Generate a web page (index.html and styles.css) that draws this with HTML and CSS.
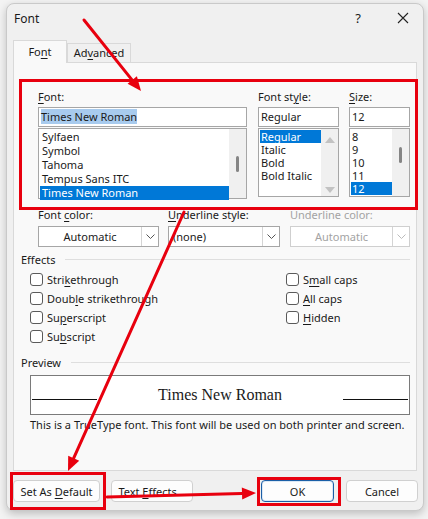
FILE: index.html
```html
<!DOCTYPE html>
<html lang="en">
<head>
  <meta charset="UTF-8" />
  <title>Font</title>
  <link rel="stylesheet" href="styles.css">
</head>
<body>
  <div class="window">
    <!-- Title bar -->
    <div class="titlebar">
      <span class="title">Font</span>
      <span class="help">?</span>
      <svg class="close" width="12" height="12" viewBox="0 0 12 12">
        <path d="M1 1 L11 11 M11 1 L1 11" stroke="#222" stroke-width="1.1" fill="none"/>
      </svg>
    </div>

    <!-- Tabs -->
    <div class="tabs">
      <div class="tab active">Fo<u>n</u>t</div>
      <div class="tab">Ad<u>v</u>anced</div>
    </div>

    <div class="panel">
      <div class="font-row">
        <div class="col col-font">
          <div class="label"><u>F</u>ont:</div>
          <div class="field"><span class="sel-text">Times New Roman</span></div>
          <div class="list list-font">
            <div class="items">
              <div class="item">Sylfaen</div>
              <div class="item">Symbol</div>
              <div class="item">Tahoma</div>
              <div class="item">Tempus Sans ITC</div>
              <div class="item selected">Times New Roman</div>
            </div>
            <div class="scroll"><span class="thumb thumb-font"></span></div>
          </div>
        </div>
        <div class="col col-style">
          <div class="label">Font st<u>y</u>le:</div>
          <div class="field">Regular</div>
          <div class="list list-small">
            <div class="items">
              <div class="item selected">Regular</div>
              <div class="item">Italic</div>
              <div class="item">Bold</div>
              <div class="item">Bold Italic</div>
            </div>
            <div class="scroll scroll-arrows">
              <span class="arrow-up"></span>
              <span class="arrow-down"></span>
            </div>
          </div>
        </div>
        <div class="col col-size">
          <div class="label"><u>S</u>ize:</div>
          <div class="field">12</div>
          <div class="list list-small">
            <div class="items">
              <div class="item">8</div>
              <div class="item">9</div>
              <div class="item">10</div>
              <div class="item">11</div>
              <div class="item selected">12</div>
            </div>
            <div class="scroll"><span class="thumb thumb-size"></span></div>
          </div>
        </div>
      </div>

      <div class="combo-row">
        <div class="combo-col w-color">
          <div class="label">Font <u>c</u>olor:</div>
          <div class="combo">
            <span class="combo-text center">Automatic</span>
            <span class="combo-btn"><svg width="9" height="5" viewBox="0 0 9 5"><path d="M0.5 0.5 L4.5 4.5 L8.5 0.5" stroke="#555" fill="none"/></svg></span>
          </div>
        </div>
        <div class="combo-col w-style">
          <div class="label"><u>U</u>nderline style:</div>
          <div class="combo">
            <span class="combo-text">(none)</span>
            <span class="combo-btn"><svg width="9" height="5" viewBox="0 0 9 5"><path d="M0.5 0.5 L4.5 4.5 L8.5 0.5" stroke="#555" fill="none"/></svg></span>
          </div>
        </div>
        <div class="combo-col w-ucolor disabled">
          <div class="label">Underline color:</div>
          <div class="combo">
            <span class="combo-text center">Automatic</span>
            <span class="combo-btn"><svg width="9" height="5" viewBox="0 0 9 5"><path d="M0.5 0.5 L4.5 4.5 L8.5 0.5" stroke="#bbb" fill="none"/></svg></span>
          </div>
        </div>
      </div>

      <div class="group-head"><span>Effects</span><i></i></div>
      <div class="effects">
        <div class="effects-col left">
          <label class="check"><span class="box"></span>Stri<u>k</u>ethrough</label>
          <label class="check"><span class="box"></span>Doub<u>l</u>e strikethrough</label>
          <label class="check"><span class="box"></span>Su<u>p</u>erscript</label>
          <label class="check"><span class="box"></span>Su<u>b</u>script</label>
        </div>
        <div class="effects-col">
          <label class="check"><span class="box"></span>S<u>m</u>all caps</label>
          <label class="check"><span class="box"></span><u>A</u>ll caps</label>
          <label class="check"><span class="box"></span><u>H</u>idden</label>
        </div>
      </div>

      <div class="group-head preview-head"><span>Preview</span><i></i></div>
      <div class="preview">
        <span class="rule"></span>
        <span class="sample">Times New Roman</span>
        <span class="rule"></span>
      </div>
      <div class="note">This is a TrueType font. This font will be used on both printer and screen.</div>
    </div>

    <!-- Dialog buttons -->
    <div class="buttons">
      <button class="btn b-default">Set As <u>D</u>efault</button>
      <button class="btn b-effects">Text <u>E</u>ffects...</button>
      <span class="spacer"></span>
      <button class="btn b-ok">OK</button>
      <button class="btn b-cancel">Cancel</button>
    </div>
  </div>

  <!-- Red annotations drawn over the screenshot -->
  <div class="mark mark-fonts"></div>
  <div class="mark mark-default"></div>
  <div class="mark mark-ok"></div>
  <svg class="arrows" width="428" height="519" viewBox="0 0 428 519">
    <g stroke="#e8000e" stroke-width="3" fill="none" stroke-linecap="round">
      <line x1="84" y1="20" x2="132.2" y2="80.1"/>
      <line x1="184" y1="212" x2="73.7" y2="458.2"/>
      <line x1="107" y1="497" x2="242" y2="493.4"/>
    </g>
    <g fill="#e8000e">
      <polygon points="141,91 127.6,83.8 136.9,76.3"/>
      <polygon points="68,471 68.2,455.8 79.2,460.7"/>
      <polygon points="256,493 242.2,499.4 241.8,487.4"/>
    </g>
  </svg>
</body>
</html>
```

FILE: styles.css
```css
/* Base */
* {
  margin: 0;
  padding: 0;
  box-sizing: border-box;
}
body {
  width: 428px;
  height: 519px;
  overflow: hidden;
  background: #f3f3f3;
  font-family: "Noto Sans", "Open Sans", sans-serif;
  font-size: 11px;
  color: #1a1a1a;
  position: relative;
}
u {
  text-decoration-thickness: 1px;
  text-underline-offset: 2px;
}
/* Window frame */
.window {
  margin: 3px 0 0 6px;
  width: 418px;
  height: 508px;
  background: #f0f0f0;
  border: 1px solid #c9c9c9;
  border-radius: 8px;
  box-shadow: 0 3px 8px rgba(0, 0, 0, 0.22);
}
.titlebar {
  height: 28px;
  display: flex;
  align-items: center;
  padding-left: 7px;
  font-size: 12px;
}
.title {
  flex: 1;
}
.help {
  font-size: 13px;
  margin-right: 36px;
}
.close {
  margin-right: 14px;
}
/* Tabs */
.tabs {
  display: flex;
  align-items: flex-end;
  margin: 8px 0 0 6px;
  height: 22px;
}
.tab {
  height: 19px;
  width: 64px;
  border: 1px solid #d9d9d9;
  border-bottom: none;
  text-align: center;
  line-height: 18px;
  background: #f0f0f0;
}
.tab.active {
  height: 23px;
  width: 54px;
  background: #f9f9f9;
  line-height: 21px;
  position: relative;
  z-index: 1;
  margin-bottom: -1px;
}
.panel {
  margin: 0 6px;
  height: 409px;
  background: #f9f9f9;
  border: 1px solid #d9d9d9;
  padding: 27px 0 0 7px;
}
/* Font, style and size lists */
.font-row {
  display: flex;
  margin-left: 17px;
}
.col-font { width: 209px; margin-right: 11px; }
.col-style { width: 81px; margin-right: 10px; }
.col-size { width: 61px; }
.label {
  height: 14px;
  line-height: 14px;
  margin-bottom: 3px;
  white-space: nowrap;
}
.field {
  height: 20px;
  background: #fff;
  border: 1px solid #a6a6a6;
  padding: 0 2px;
  line-height: 18px;
  white-space: nowrap;
  overflow: hidden;
}
.sel-text {
  background: #a8cbee;
}
.list {
  margin-top: 1px;
  background: #fff;
  border: 1px solid #a6a6a6;
  display: flex;
  padding: 1px 0 0 1px;
}
.list-font { height: 71px; }
.list-small { height: 69px; }
.items {
  flex: 1;
}
.item {
  height: 13px;
  line-height: 13px;
  padding-left: 1px;
  white-space: nowrap;
}
.list-font .item {
  height: 14px;
  line-height: 14px;
  padding-left: 2px;
}
.item.selected {
  background: #0078d7;
  color: #fff;
}
.scroll {
  width: 17px;
  margin-top: -1px;
  background: #f0f0f0;
  position: relative;
}
.thumb {
  position: absolute;
  left: 7px;
  width: 3px;
  height: 16px;
  border-radius: 2px;
  background: #858585;
}
.thumb-font { top: 27px; }
.thumb-size { top: 18px; }
.arrow-up,
.arrow-down {
  position: absolute;
  left: 4px;
  width: 0;
  height: 0;
  border-left: 5px solid transparent;
  border-right: 5px solid transparent;
}
.arrow-up { top: 8px; border-bottom: 6px solid #c2c2c2; }
.arrow-down { bottom: 3px; border-top: 6px solid #c2c2c2; }
/* Colour / underline combos */
.combo-row {
  display: flex;
  margin: 9px 0 0 17px;
}
.combo-row .label {
  margin-bottom: 4px;
}
.w-color { width: 121px; margin-right: 9px; }
.w-style { width: 112px; margin-right: 10px; }
.w-ucolor { width: 120px; }
.combo {
  height: 21px;
  display: flex;
  background: #fff;
  border: 1px solid #a6a6a6;
}
.combo-text {
  flex: 1;
  line-height: 19px;
  padding-left: 4px;
}
.combo-text.center {
  text-align: center;
  padding-left: 0;
}
.combo-btn {
  width: 17px;
  border-left: 1px solid #d4d4d4;
  display: flex;
  align-items: center;
  justify-content: center;
}
.disabled .label,
.disabled .combo-text {
  color: #a3a3a3;
}
.disabled .combo {
  border-color: #cfcfcf;
}
/* Group headings with a rule */
.group-head {
  display: flex;
  align-items: center;
  height: 14px;
  margin-top: 5px;
  margin-right: 6px;
}
.group-head i {
  flex: 1;
  height: 1px;
  background: #dedede;
  margin-left: 10px;
}
/* Effects check boxes */
.effects {
  display: flex;
  margin: 4px 0 0 9px;
}
.effects-col.left {
  width: 256px;
}
.check {
  display: flex;
  align-items: center;
  height: 19px;
}
.box {
  width: 13px;
  height: 13px;
  border: 1px solid #5a5a5a;
  border-radius: 3px;
  background: #fff;
  margin-right: 4px;
}
/* Preview */
.preview-head {
  margin-top: 9px;
}
.preview {
  margin: 6px 0 0 9px;
  width: 380px;
  height: 40px;
  background: #fff;
  border: 1px solid #7a7a7a;
  display: flex;
  align-items: baseline;
  justify-content: space-between;
  padding: 9px 1px 0;
}
.sample {
  font-family: "Liberation Serif", serif;
  font-size: 16px;
  line-height: 20px;
}
.rule {
  width: 65px;
  border-bottom: 1px solid #111;
  height: 1px;
}
.note {
  margin: 3px 0 0 9px;
  line-height: 14px;
  white-space: nowrap;
}
/* Bottom buttons */
.buttons {
  display: flex;
  margin: 9px 0 0 6px;
  padding-right: 5px;
}
.btn {
  height: 22px;
  font: inherit;
  background: #fdfdfd;
  border: 1px solid #d0d0d0;
  border-radius: 4px;
  color: #1a1a1a;
}
.b-default { width: 87px; margin-right: 11px; }
.b-effects { width: 82px; }
.spacer { flex: 1; }
.b-ok {
  width: 73px;
  margin-right: 12px;
  border-color: #1b5fa6;
  box-shadow: inset 0 0 0 1px #dbe8f5;
}
.b-cancel { width: 72px; }
/* Annotation overlay */
.mark {
  position: absolute;
  border: 3px solid #e8000e;
}
.mark-fonts { left: 19px; top: 79px; width: 399px; height: 131px; }
.mark-default { left: 10px; top: 472px; width: 96px; height: 38px; }
.mark-ok { left: 257px; top: 477px; width: 84px; height: 29px; }
.arrows {
  position: absolute;
  left: 0;
  top: 0;
  pointer-events: none;
}
```
